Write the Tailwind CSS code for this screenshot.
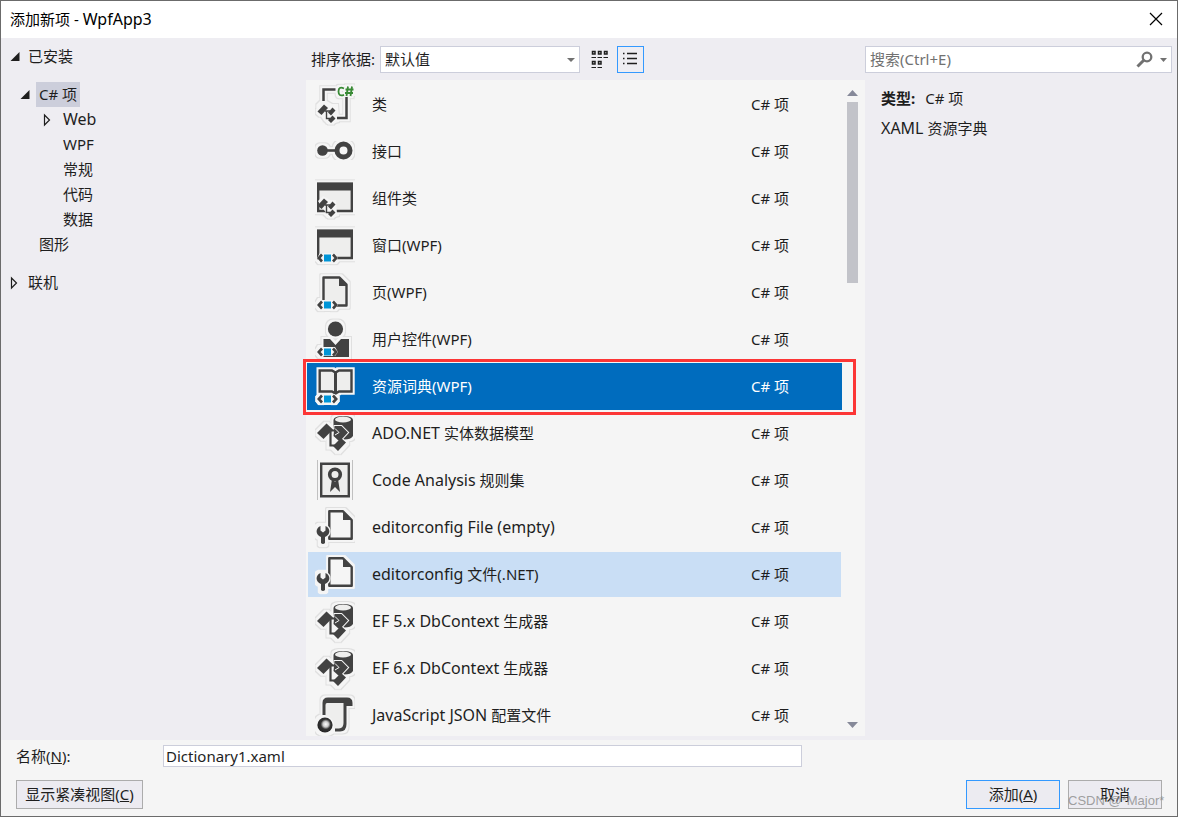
<!DOCTYPE html>
<html lang="zh-CN">
<head>
<meta charset="utf-8">
<title>添加新项 - WpfApp3</title>
<script src="https://cdn.jsdelivr.net/npm/@tailwindcss/browser@4"></script>
</head>
<body class="font-['Noto_Sans','Noto_Sans_CJK_SC',sans-serif] text-[15px] leading-[25px] text-[#1e1e1e]">
<svg class="absolute size-0" aria-hidden="true">
  <defs>
    <filter id="halo" x="-20%" y="-20%" width="140%" height="140%" color-interpolation-filters="sRGB">
      <feMorphology in="SourceAlpha" operator="dilate" radius="3" result="outer"/>
      <feFlood flood-color="#e0e0e0"/><feComposite in2="outer" operator="in" result="line"/>
      <feMorphology in="SourceAlpha" operator="dilate" radius="2" result="inner"/>
      <feFlood flood-color="#f5f5f5"/><feComposite in2="inner" operator="in" result="fill"/>
      <feMerge><feMergeNode in="line"/><feMergeNode in="fill"/><feMergeNode in="SourceGraphic"/></feMerge>
    </filter>
    <filter id="glow" x="-20%" y="-20%" width="140%" height="140%" color-interpolation-filters="sRGB">
      <feMorphology in="SourceAlpha" operator="dilate" radius="2" result="inner"/>
      <feFlood flood-color="#f5f5f5"/><feComposite in2="inner" operator="in" result="fill"/>
      <feMerge><feMergeNode in="fill"/><feMergeNode in="SourceGraphic"/></feMerge>
    </filter>
    <g id="nodes">
      <path d="M3 26 8 21 15 25 21 25 22 39 14 41 9 35Z" fill="#f5f5f5"/>
      <path d="M2.500 30.500 9 23.500 13 27 6.500 34Z" fill="#424242"/>
      <path d="M10 30H15M11.500 30V37.500H15" fill="none" stroke="#424242" stroke-width="1.400"/>
      <path d="M13 31.500 17.500 26.500 20.500 29.500 16 34.500ZM13 39 17.500 34.500 20.500 37.500 16 42Z" fill="#424242"/>
    </g>
    <g id="xaml">
      <path d="M5 31H20L23 36 20 40H5L2 36Z" fill="#f5f5f5"/>
      <path d="M7 32.500 3.800 36 7 39.500M18 32.500 21.200 36 18 39.500" fill="none" stroke="#424242" stroke-width="2.600"/>
      <path d="M9 32.500H16V39.500H9Z" fill="#0095d7"/>
    </g>
    <g id="window">
      <path d="M3.200 9V36H36.800V9Z" fill="#eeeeed" stroke="#424242" stroke-width="2.400"/>
      <path d="M2 7.500H38V15.500H2Z" fill="#424242"/>
    </g>
    <g id="configfile">
      <path d="M14.300 7.300H28L36.700 16V34.700H14.300Z" fill="#f5f5f5" stroke="#424242" stroke-width="2.400" stroke-linejoin="round"/>
      <path d="M28 7V16H37Z" fill="#424242"/>
      <path d="M5.500 22C0 24.500 .5 31 6 33V39Q8 41 10 39V33C15.500 31 16 24.500 10.500 22V26.500L8 28.500 5.500 26.500Z" fill="#424242" stroke="#f5f5f5" stroke-width="2.500" stroke-linejoin="round" paint-order="stroke"/>
    </g>
    <g id="entity">
      <path d="M18.500 10C18.500 4.500 38 4.500 38 10V26Q36 29.500 29 29.500L18.500 18Z" fill="#424242"/>
      <ellipse cx="28" cy="9.500" rx="8" ry="3" fill="#eeeeed"/>
      <path d="M12 20.500H23M15.500 21V35.500H22" fill="none" stroke="#f5f5f5" stroke-width="4"/>
      <path d="M2 23 11.500 13.500 18 19.500 8.500 29Z" fill="#424242"/>
      <path d="M18 36 26 28 31 32.500 23 41ZM19.500 16H26.500L33 22.500 24.500 31.500 18.500 26Z" fill="#424242" stroke="#f5f5f5" stroke-width="2" paint-order="stroke"/>
      <path d="M12 20.500H25M15.500 21V35.500H22" fill="none" stroke="#424242" stroke-width="2.200"/>
      <path d="M20 18.500 24 22.500 20 25" fill="none" stroke="#f5f5f5" stroke-width="1"/>
    </g>
  </defs>
</svg>

<div class="flex h-screen flex-col overflow-hidden border border-[#6b6b6b] bg-[#eeedf2]">
  <header class="flex h-[37px] shrink-0 items-center justify-between bg-white pr-[13px] pb-px pl-[9px] text-black">
    <h1>添加新项 - <span class="text-base leading-[25px]">WpfApp3</span></h1>
    <button type="button" aria-label="关闭" class="flex size-4 items-center justify-center">
      <svg class="size-4" viewBox="0 0 16 16" fill="none" stroke="#000" stroke-width="1.200"><path d="M2 2 14 14M14 2 2 14"/></svg>
    </button>
  </header>

  <main class="flex min-h-0 flex-1">
    <nav class="w-[305px] shrink-0 pt-[6px]" aria-label="类别">
      <ul class="flex flex-col gap-[13px]">
        <li>
          <button type="button" class="flex h-[25px] items-center gap-2 pl-[9px]">
            <svg class="h-3 w-[10px]" viewBox="0 0 10 12"><path d="M9.500 1V10H.5Z" fill="#1e1e1e"/></svg>已安装
          </button>
          <ul class="mt-[13px]">
            <li>
              <button type="button" class="flex h-[25px] items-center gap-[6px] pl-[19px]">
                <svg class="h-3 w-[10px]" viewBox="0 0 10 12"><path d="M9.500 1V10H.5Z" fill="#1e1e1e"/></svg><span class="bg-[#cccedb] px-[3px]">C# 项</span>
              </button>
              <ul class="pl-[42px]">
                <li><button type="button" class="flex h-[25px] items-center gap-3 text-base leading-[25px]">
                  <svg class="h-[14px] w-2" viewBox="0 0 8 14" fill="none" stroke="#1e1e1e" stroke-width="1.200"><path d="M1.500 2V12L6.500 7Z"/></svg>Web</button></li>
                <li><button type="button" class="block h-[25px] pl-5">WPF</button></li>
                <li><button type="button" class="block h-[25px] pl-5">常规</button></li>
                <li><button type="button" class="block h-[25px] pl-5">代码</button></li>
                <li><button type="button" class="block h-[25px] pl-5">数据</button></li>
              </ul>
            </li>
            <li><button type="button" class="block h-[25px] pl-[38px]">图形</button></li>
          </ul>
        </li>
        <li>
          <button type="button" class="flex h-[25px] items-center gap-[10px] pl-[9px]">
            <svg class="h-[14px] w-2" viewBox="0 0 8 14" fill="none" stroke="#1e1e1e" stroke-width="1.200"><path d="M1.500 2V12L6.500 7Z"/></svg>联机
          </button>
        </li>
      </ul>
    </nav>

    <section class="flex w-[559px] shrink-0 flex-col pt-2 pb-1">
      <div class="mb-[7px] flex h-[27px] shrink-0 items-center pl-[5px]">
        <label for="sort" class="w-[69px] whitespace-nowrap">排序依据:</label>
        <div class="relative">
          <select id="sort" class="h-[27px] w-[200px] appearance-none border border-[#cccedb] bg-white pl-1 leading-[25px]"><option>默认值</option></select>
          <svg class="pointer-events-none absolute top-3 right-[5px] h-1 w-2" viewBox="0 0 8 4"><path d="M0 0H8L4 4Z" fill="#717171"/></svg>
        </div>
        <button type="button" aria-label="图标视图" class="flex h-[27px] w-[37px] items-center justify-center pl-[2px]">
          <svg class="h-5 w-[18px]" viewBox="0 0 18 20" fill="none" stroke="#1e1e1e" stroke-width="1.500">
            <path d="M1.500 1.500H4V4H1.500ZM7.500 1.500H10V4H7.500ZM13.500 1.500H16V4H13.500ZM1.500 11.500H4V14H1.500ZM7.500 11.500H10V14H7.500Z"/>
            <path d="M.5 7.500H5M6.500 7.500H11M12.500 7.500H17M.5 17.500H5M6.500 17.500H11" stroke-width="1.200"/>
          </svg>
        </button>
        <button type="button" aria-label="列表视图" aria-pressed="true" class="flex size-[27px] items-start justify-center border border-[#3399ff] pt-1 pr-[2px]">
          <svg class="size-4" viewBox="0 0 16 16" stroke="#1e1e1e"><path d="M5 2.500H15M5 7.500H15M5 12.500H15" stroke-width="1.300"/><path d="M1 2.500H2.500M1 7.500H2.500M1 12.500H2.500" stroke-width="1.300"/></svg>
        </button>
      </div>

      <div class="flex min-h-0 flex-1 overflow-x-visible overflow-y-clip bg-[#f5f5f5]">
        <ul class="mt-px ml-px min-w-0 flex-1">
          <li class="flex h-[47px] items-center pl-2">
            <svg class="h-[47px] w-10" viewBox="0 0 40 47"><g filter="url(#halo)"><path d="M8.500 20V8.500H20.500M31.500 16V37H22" fill="none" stroke="#424242" stroke-width="2.500"/><use href="#nodes"/><path d="M29 7.500Q23.500 5 23.500 10.500T29 13.800M33 5.500 31.500 15M37 5.500 35.500 15M30.500 8.500H38.500M30 12H38" fill="none" stroke="#388a34" stroke-width="1.800"/></g></svg>
            <span class="flex-1 pl-[17px]">类</span><span class="w-[91px]">C# 项</span>
          </li>
          <li class="flex h-[47px] items-center pl-2">
            <svg class="h-[47px] w-10" viewBox="0 0 40 47"><g filter="url(#halo)"><path d="M7 22.500H22" stroke="#424242" stroke-width="2.600"/><circle cx="7.500" cy="22.500" r="5.300" fill="#424242"/><circle cx="28.500" cy="22.500" r="6.500" fill="#f5f5f5" stroke="#424242" stroke-width="5"/></g></svg>
            <span class="flex-1 pl-[17px]">接口</span><span class="w-[91px]">C# 项</span>
          </li>
          <li class="flex h-[47px] items-center pl-2">
            <svg class="h-[47px] w-10" viewBox="0 0 40 47"><g filter="url(#halo)"><use href="#window"/><use href="#nodes"/></g></svg>
            <span class="flex-1 pl-[17px]">组件类</span><span class="w-[91px]">C# 项</span>
          </li>
          <li class="flex h-[47px] items-center pl-2">
            <svg class="h-[47px] w-10" viewBox="0 0 40 47"><g filter="url(#halo)"><use href="#window"/><use href="#xaml"/></g></svg>
            <span class="flex-1 pl-[17px]">窗口(WPF)</span><span class="w-[91px]">C# 项</span>
          </li>
          <li class="flex h-[47px] items-center pl-2">
            <svg class="h-[47px] w-10" viewBox="0 0 40 47"><g filter="url(#halo)"><path d="M8.500 36V8.500H24.500L31.500 15.500V36.500H20" fill="#eeeeed" stroke="#424242" stroke-width="2.400" stroke-linejoin="round"/><path d="M24 8V17H32Z" fill="#424242"/><use href="#xaml"/></g></svg>
            <span class="flex-1 pl-[17px]">页(WPF)</span><span class="w-[91px]">C# 项</span>
          </li>
          <li class="flex h-[47px] items-center pl-2">
            <svg class="h-[47px] w-10" viewBox="0 0 40 47"><g filter="url(#halo)"><circle cx="20.500" cy="13" r="7.600" fill="#424242"/><path d="M8.500 23H15L20.500 29 26 23H34V41H8.500Z" fill="#424242"/><use href="#xaml"/></g></svg>
            <span class="flex-1 pl-[17px]">用户控件(WPF)</span><span class="w-[91px]">C# 项</span>
          </li>
          <li class="relative flex h-[47px] items-center bg-[#006cbe] pl-2 text-white" aria-current="true">
            <svg class="h-[47px] w-10" viewBox="0 0 40 47"><g filter="url(#glow)"><path d="M4.700 7.500H17L20.500 9.500 24 7.500H36.500V28.500H24L20.500 30.500 17 28.500H4.700Z" fill="#eeeeed" stroke="#424242" stroke-width="2.400"/><path d="M20.500 9V31" stroke="#424242" stroke-width="3"/><use href="#xaml"/></g></svg>
            <span class="flex-1 pl-[17px]">资源词典(WPF)</span><span class="w-[91px]">C# 项</span>
            <span class="pointer-events-none absolute -top-1 -right-[14px] -bottom-[5px] -left-1 border-3 border-[#fc3636]"></span>
          </li>
          <li class="flex h-[47px] items-center pl-2">
            <svg class="h-[47px] w-10" viewBox="0 0 40 47"><g filter="url(#halo)"><use href="#entity"/></g></svg>
            <span class="flex-1 pl-[17px]"><span class="text-base leading-[25px]">ADO.NET</span> 实体数据模型</span><span class="w-[91px]">C# 项</span>
          </li>
          <li class="flex h-[47px] items-center pl-2">
            <svg class="h-[47px] w-10" viewBox="0 0 40 47"><path d="M2.500 3V43M37.500 3V43" stroke="#c0c0c0"/><path d="M6.200 6.700H33.800V39.300H6.200Z" fill="#eeeeed" stroke="#424242" stroke-width="2.400"/><circle cx="20" cy="17.500" r="5.300" fill="none" stroke="#424242" stroke-width="3.600"/><path d="M17 22 15 35 20 30 25 35 23 22 20 25Z" fill="#424242"/></svg>
            <span class="flex-1 pl-[17px]"><span class="text-base leading-[25px]">Code Analysis</span> 规则集</span><span class="w-[91px]">C# 项</span>
          </li>
          <li class="flex h-[47px] items-center pl-2">
            <svg class="h-[47px] w-10" viewBox="0 0 40 47"><g filter="url(#halo)"><use href="#configfile"/></g></svg>
            <span class="flex-1 pl-[17px] text-base leading-[25px]">editorconfig File (empty)</span><span class="w-[91px]">C# 项</span>
          </li>
          <li class="flex h-[47px] items-center border border-[#f5f5f5] bg-[#c9def5] pl-[7px]">
            <svg class="h-[47px] w-10" viewBox="0 0 40 47"><g filter="url(#glow)"><use href="#configfile"/></g></svg>
            <span class="flex-1 pl-[17px]"><span class="text-base leading-[25px]">editorconfig</span> 文件(.NET)</span><span class="w-[90px]">C# 项</span>
          </li>
          <li class="flex h-[47px] items-center pl-2">
            <svg class="h-[47px] w-10" viewBox="0 0 40 47"><g filter="url(#halo)"><use href="#entity"/></g></svg>
            <span class="flex-1 pl-[17px]"><span class="text-base leading-[25px]">EF 5.x DbContext</span> 生成器</span><span class="w-[91px]">C# 项</span>
          </li>
          <li class="flex h-[47px] items-center pl-2">
            <svg class="h-[47px] w-10" viewBox="0 0 40 47"><g filter="url(#halo)"><use href="#entity"/></g></svg>
            <span class="flex-1 pl-[17px]"><span class="text-base leading-[25px]">EF 6.x DbContext</span> 生成器</span><span class="w-[91px]">C# 项</span>
          </li>
          <li class="flex h-[47px] items-center pl-2">
            <svg class="h-[47px] w-10" viewBox="0 0 40 47">
              <defs><radialGradient id="ball" cx=".55" cy=".45" r=".6"><stop offset="0" stop-color="#fff"/><stop offset=".3" stop-color="#ccc"/><stop offset=".55" stop-color="#333"/><stop offset="1" stop-color="#222"/></radialGradient></defs>
              <g filter="url(#halo)"><path d="M10 24V9H30V35Q28 38 22 38L10 30Z" fill="#eeeeed"/><path d="M7.500 23V11Q7.500 5.500 13 5.500H32Q37.500 5.500 37.500 11V14H31.500V32Q31.500 39.500 25 39.500H20V36.500H24Q28.500 36 28.500 31V11H12Q10.500 11 10.500 13V23Z" fill="#424242"/><circle cx="10" cy="33" r="9" fill="#f5f5f5"/><circle cx="10" cy="33" r="7.600" fill="url(#ball)"/></g>
            </svg>
            <span class="flex-1 pl-[17px]"><span class="text-base leading-[25px]">JavaScript JSON</span> 配置文件</span><span class="w-[91px]">C# 项</span>
          </li>
        </ul>
        <div class="mr-[7px] ml-[5px] flex w-[11px] shrink-0 flex-col pt-[10px] pb-2" aria-hidden="true">
          <svg class="h-[6px] w-[11px]" viewBox="0 0 11 6"><path d="M0 6H11L5.500 0Z" fill="#868999"/></svg>
          <div class="mt-[6px] h-[181px] bg-[#c2c3c9]"></div>
          <svg class="mt-auto h-[6px] w-[11px]" viewBox="0 0 11 6"><path d="M0 0H11L5.500 6Z" fill="#868999"/></svg>
        </div>
      </div>
    </section>

    <aside class="min-w-0 flex-1 pt-2 pr-[5px]">
      <div class="flex h-[27px] items-center border border-[#cccedb] bg-white pr-1">
        <input type="search" aria-label="搜索" placeholder="搜索(Ctrl+E)" class="min-w-0 flex-1 bg-transparent pl-1 outline-none placeholder:text-[#717171]">
        <button type="button" aria-label="搜索" class="flex items-center gap-[7px]">
          <svg class="size-[17px]" viewBox="0 0 17 17" fill="none" stroke="#717171"><circle cx="11" cy="6" r="4.300" stroke-width="2.300"/><path d="M8 9 1.500 15.500" stroke-width="3"/></svg>
          <svg class="h-1 w-[7px]" viewBox="0 0 7 4"><path d="M0 0H7L3.500 4Z" fill="#717171"/></svg>
        </button>
      </div>
      <div class="flex flex-col gap-[5px] pt-[13px] pl-4">
        <p><strong class="mr-[10px] font-bold">类型:</strong>C# 项</p>
        <p><span class="text-base leading-[25px]">XAML</span> 资源字典</p>
      </div>
    </aside>
  </main>

  <footer class="flex shrink-0 flex-col gap-[13px] bg-[#f5f5f5] pt-[5px] pr-[15px] pb-[7px] pl-[15px]">
    <div class="flex h-[22px] items-center">
      <label for="name" class="w-[147px] shrink-0">名称(<u>N</u>):</label>
      <input id="name" type="text" value="Dictionary1.xaml" class="h-[22px] min-w-0 flex-1 border border-[#cccedb] bg-white pl-[2px] outline-none">
      <div class="w-[360px] shrink-0"></div>
    </div>
    <div class="flex h-[29px] gap-2">
      <button type="button" class="mr-auto w-[127px] border border-[#acacac] bg-[#ecebf1] leading-[27px]">显示紧凑视图(<u>C</u>)</button>
      <button type="submit" class="w-[94px] border border-[#3399ff] bg-[#ecebf1] leading-[27px]">添加(<u>A</u>)</button>
      <div class="relative">
        <button type="button" class="h-[29px] w-[94px] border border-[#acacac] bg-[#ecebf1] leading-[27px]">取消</button>
        <span class="pointer-events-none absolute top-[13px] left-0 font-['Liberation_Sans',sans-serif] text-[13px] leading-4 whitespace-nowrap text-[#8a8a8a]/80">CSDN @*Major*</span>
      </div>
    </div>
  </footer>
</div>
</body>
</html>
